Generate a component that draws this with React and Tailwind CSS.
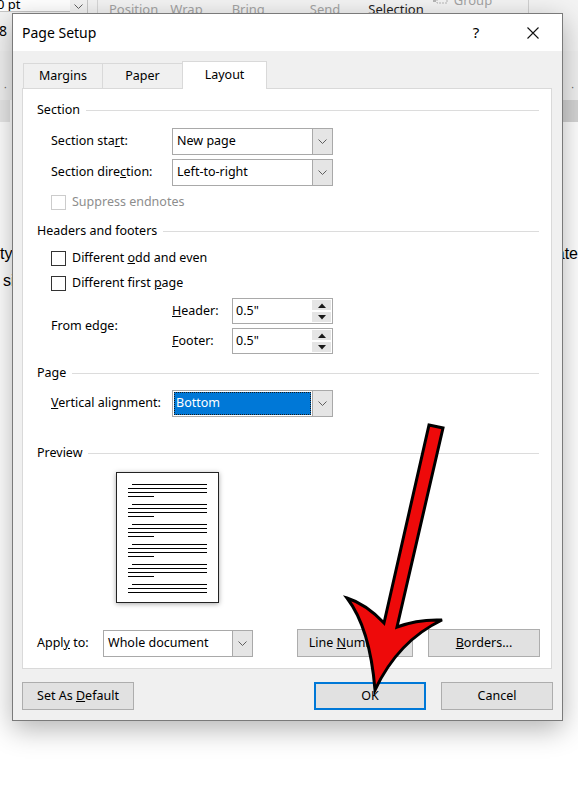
import React from 'react';
import clsx from 'clsx';

function Chevron() {
  return (
    <svg width="9" height="5" viewBox="0 0 9 5">
      <path d="M0.5 0.5 L4.5 4.5 L8.5 0.5" fill="none" stroke="#5f5f5f" strokeWidth="1" />
    </svg>
  );
}

function GroupHeader({ title, className }) {
  return (
    <div className={clsx('flex h-[22px] items-center pl-[14px] pr-[12px]', className)}>
      <span>{title}</span>
      <div className="ml-[6px] h-px flex-1 bg-[#dcdcdc]" />
    </div>
  );
}

function Select({ value, className, highlighted }) {
  return (
    <div className={clsx('flex h-[27px] border border-[#a9a9a9] bg-white', className)}>
      {highlighted ? (
        <div className="m-px flex flex-1 items-center bg-[#0078d7] pl-[2px] text-white outline-1 -outline-offset-1 outline-dotted outline-[#1a1a1a]">
          {value}
        </div>
      ) : (
        <div className="flex flex-1 items-center pl-[4px]">{value}</div>
      )}
      <div className="flex w-[20px] items-center justify-center border-l border-[#a9a9a9] bg-[#e5e5e5]">
        <Chevron />
      </div>
    </div>
  );
}

function Spin({ value }) {
  return (
    <div className="flex h-[26px] w-[101px] border border-[#a9a9a9] bg-white">
      <div className="flex flex-1 items-center pl-[3px]">{value}</div>
      <div className="flex w-[20px] flex-col gap-[2px] py-[1px] pr-[1px]">
        <div className="flex flex-1 items-center justify-center bg-[#e5e5e5]">
          <svg width="8" height="5" viewBox="0 0 8 5"><path d="M0 5 L4 0.5 L8 5 Z" fill="#1a1a1a" /></svg>
        </div>
        <div className="flex flex-1 items-center justify-center bg-[#e5e5e5]">
          <svg width="8" height="5" viewBox="0 0 8 5"><path d="M0 0 L4 4.5 L8 0 Z" fill="#1a1a1a" /></svg>
        </div>
      </div>
    </div>
  );
}

function Check({ children, disabled, className }) {
  return (
    <div className={clsx('flex h-[22px] items-center pl-[28px]', className)}>
      <div className={clsx('h-[15px] w-[15px] border bg-white', disabled ? 'border-[#cccccc]' : 'border-[#333333]')} />
      <span className={clsx('ml-[6px]', disabled && 'text-[#8d8d8d]')}>{children}</span>
    </div>
  );
}

function Button({ children, className, primary }) {
  return (
    <div
      className={clsx(
        'flex h-[28px] w-[112px] items-center justify-center bg-[#e1e1e1]',
        primary ? 'border-2 border-[#0078d7]' : 'border border-[#adadad]',
        className
      )}
    >
      <span>{children}</span>
    </div>
  );
}

function PreviewPage() {
  const groups = [0, 1, 2, 3, 4, 5];
  return (
    <div className="ml-[93px] mt-[8px] h-[131px] w-[103px] border border-[#222] bg-white shadow-[0_1px_5px_rgba(0,0,0,0.35)]">
      <svg width="101" height="129" viewBox="0 0 101 129">
        {groups.map((g) => {
          const y = 11.5 + g * 20;
          return (
            <g key={g} stroke="#000" strokeWidth="1">
              <line x1="15" y1={y} x2="90" y2={y} />
              <line x1="11" y1={y + 4} x2="90" y2={y + 4} />
              <line x1="11" y1={y + 8} x2="90" y2={y + 8} />
              {g < 5 && <line x1="11" y1={y + 12} x2="37" y2={y + 12} />}
            </g>
          );
        })}
      </svg>
    </div>
  );
}

export default function App() {
  return (
    <div className="relative h-[807px] w-[578px] overflow-hidden bg-white font-['Noto_Sans',sans-serif] text-[12.5px] text-black">
      {/* word window behind the dialog */}
      <div className="h-[51px] bg-[#f3f3f3]">
        <div className="flex h-[13px] items-start">
          <div className="h-[12px] w-[70px] overflow-hidden border-b border-[#c6c6c6] bg-white">
            <div className="-ml-[3px] -mt-[4px] text-[13px] leading-[16px]">0 pt</div>
          </div>
          <div className="flex h-[12px] w-[17px] items-center justify-center">
            <Chevron />
          </div>
          <div className="h-[13px] w-px bg-[#c6c6c6]" />
          <div className="ml-[9px] h-[13px] w-px bg-[#d6d6d6]" />
          <div className="ml-[11px] flex pt-[1px] text-[13px] leading-[16px] text-[#a3a3a3]">
            <span>Position</span>
            <span className="ml-[12px]">Wrap</span>
            <span className="ml-[29px]">Bring</span>
            <span className="ml-[45px]">Send</span>
            <span className="ml-[28px] text-[#222]">Selection</span>
            <span className="-mt-[6px] ml-[8px] flex items-start">
              <svg width="18" height="14" viewBox="0 0 18 14">
                <rect x="5" y="0" width="10" height="8" fill="none" stroke="#b5b5b5" strokeDasharray="2 1" />
                <rect x="1" y="4" width="3" height="3" fill="#b5b5b5" />
              </svg>
              <span className="ml-[4px] -mt-[3px]">Group</span>
            </span>
          </div>
          <div className="ml-[36px] h-[13px] w-px bg-[#d0d0d0]" />
        </div>
        <div className="mt-[10px] text-[14px] leading-[16px]">
          <span className="-ml-[1px]">8</span>
        </div>
      </div>
      <div className="flex h-[49px] items-end justify-between bg-[#f0f0f0] px-[4px] pb-[8px] text-[10px] leading-none text-[#666]">
        <span>·</span>
        <span>·</span>
      </div>
      <div className="flex h-[22px] justify-between">
        <div className="w-[10px] bg-[#e8e8e8]" />
        <div className="w-[15px] bg-[#d4d4d4]" />
      </div>
      <div className="mt-[122px] flex justify-between font-['Liberation_Sans',sans-serif] text-[16px] leading-[20px]">
        <span>ty</span>
        <span>date</span>
      </div>
      <div className="mt-[7px] pl-[3px] font-['Liberation_Sans',sans-serif] text-[16px] leading-[20px]">si</div>

      {/* page setup dialog */}
      <div className="absolute left-[12px] top-[13px] flex h-[708px] w-[551px] flex-col border border-[#7a7a7a] bg-[#f0f0f0] shadow-[0_8px_26px_rgba(0,0,0,0.3)]">
        <div className="flex h-[37px] items-center bg-white">
          <div className="flex-1 pl-[9px] text-[14px]">Page Setup</div>
          <div className="mr-[45px] w-[12px] text-center text-[15px]">?</div>
          <svg className="mr-[23px]" width="12" height="12" viewBox="0 0 12 12">
            <path d="M0.5 0.5 L11.5 11.5 M11.5 0.5 L0.5 11.5" stroke="#111" strokeWidth="1.1" />
          </svg>
        </div>

        <div className="relative z-10 -mb-px flex h-[38px] items-end pl-[10px]">
          <div className="flex h-[26px] w-[80px] items-center justify-center border border-[#d9d9d9] bg-[#f0f0f0] pt-[1px]">Margins</div>
          <div className="-ml-px flex h-[26px] w-[81px] items-center justify-center border border-[#d9d9d9] bg-[#f0f0f0] pt-[1px]">Paper</div>
          <div className="-ml-px flex h-[28px] w-[85px] items-center justify-center border border-b-0 border-[#d9d9d9] bg-white pb-[1px]">Layout</div>
        </div>

        <div className="ml-[9px] flex h-[581px] w-[530px] flex-col border border-[#d9d9d9] bg-white pt-px">
          <GroupHeader title="Section" className="mt-[9px]" />
          <div className="mt-[7px] flex items-center pl-[28px]">
            <div className="w-[121px]">Section sta<u>r</u>t:</div>
            <Select value="New page" className="w-[161px]" />
          </div>
          <div className="mt-[4px] flex items-center pl-[28px]">
            <div className="w-[121px]">Section dire<u>c</u>tion:</div>
            <Select value="Left-to-right" className="w-[161px]" />
          </div>
          <Check disabled className="mt-[5px]">Suppress endnotes</Check>

          <GroupHeader title="Headers and footers" className="mt-[7px]" />
          <Check className="mt-[5px]">Different <u>o</u>dd and even</Check>
          <Check className="mt-[3px]">Different first <u>p</u>age</Check>
          <div className="mt-[4px] flex h-[56px] items-center pl-[28px]">
            <div className="w-[121px]">From edge:</div>
            <div className="flex flex-col gap-[4px]">
              <div className="flex items-center">
                <div className="w-[60px]"><u>H</u>eader:</div>
                <Spin value={'0.5"'} />
              </div>
              <div className="flex items-center">
                <div className="w-[60px]"><u>F</u>ooter:</div>
                <Spin value={'0.5"'} />
              </div>
            </div>
          </div>

          <GroupHeader title="Page" className="mt-[8px]" />
          <div className="mt-[6px] flex items-center pl-[28px]">
            <div className="w-[121px]"><u>V</u>ertical alignment:</div>
            <Select value="Bottom" className="w-[161px]" highlighted />
          </div>

          <GroupHeader title="Preview" className="mt-[25px]" />
          <PreviewPage />

          <div className="mt-[26px] flex h-[28px] items-center pl-[14px]">
            <div className="w-[66px]">Appl<u>y</u> to:</div>
            <Select value="Whole document" className="w-[150px]" />
            <Button className="ml-[44px] w-[116px]">Line <u>N</u>umbers...</Button>
            <Button className="ml-[15px]"><u>B</u>orders...</Button>
          </div>
        </div>

        <div className="mt-[13px] flex px-[9px]">
          <Button>Set As <u>D</u>efault</Button>
          <Button primary className="ml-auto">OK</Button>
          <Button className="ml-[15px]">Cancel</Button>
        </div>
      </div>

      {/* red annotation arrow */}
      <svg className="pointer-events-none absolute left-0 top-0" width="578" height="807" viewBox="0 0 578 807">
        <path
          d="M429 425 L443 428 L397 627 Q418 619 442 620 Q398 641 375 690 Q370 628 347 598 Q366 604 384 623 Z"
          fill="#ee0a0a"
          stroke="#000"
          strokeWidth="3"
          strokeLinejoin="miter"
        />
      </svg>
    </div>
  );
}
